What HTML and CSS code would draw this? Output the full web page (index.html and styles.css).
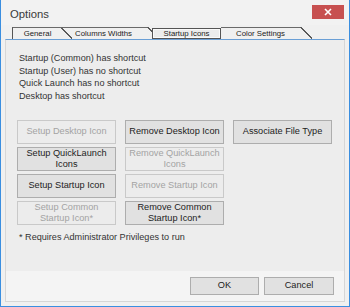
FILE: index.html
```
<!DOCTYPE html>
<html lang="en">

<head>
    <meta charset="UTF-8">
    <title>Options</title>
    <link rel="stylesheet" href="styles.css">
</head>

<body>
    <div class="window">
        <div class="titlebar">
            <span class="title">Options</span>
            <button class="close" title="Close">
                <svg width="8" height="8" viewBox="0 0 8 8">
                    <path d="M1 1 L7 7 M7 1 L1 7" stroke="#fff" stroke-width="1.6" fill="none" />
                </svg>
            </button>
        </div>

        <div class="tabs">
            <div class="tab tab-first" style="width: 48px;">General</div>
            <div class="tab" style="width: 87px;">Columns Widths</div>
            <div class="tab tab-active">Startup Icons</div>
            <div class="tab" style="width: 79px;">Color Settings</div>
        </div>

        <div class="panel">
            <div class="page">
                <div class="status">
                    <p>Startup (Common) has shortcut</p>
                    <p>Startup (User) has no shortcut</p>
                    <p>Quick Launch has no shortcut</p>
                    <p>Desktop has shortcut</p>
                </div>

                <div class="actions">
                    <button class="btn" disabled>Setup Desktop Icon</button>
                    <button class="btn">Remove Desktop Icon</button>
                    <button class="btn">Associate File Type</button>

                    <button class="btn">Setup QuickLaunch Icons</button>
                    <button class="btn" disabled>Remove QuickLaunch Icons</button>
                    <span></span>

                    <button class="btn">Setup Startup Icon</button>
                    <button class="btn" disabled>Remove Startup Icon</button>
                    <span></span>

                    <button class="btn" disabled>Setup Common Startup Icon*</button>
                    <button class="btn">Remove Common Startup Icon*</button>
                    <span></span>
                </div>

                <p class="note">* Requires Administrator Privileges to run</p>
            </div>

            <div class="footer">
                <button class="btn btn-ok">OK</button>
                <button class="btn btn-cancel">Cancel</button>
            </div>
        </div>
    </div>
</body>

</html>
```

FILE: styles.css
```
body {
    margin: 0;
    padding: 0;
    background-color: #f0f0f0;
    font-family: "Liberation Sans", Arial, sans-serif;
    color: #333;
}

.window {
    width: 350px;
    height: 307px;
    box-sizing: border-box;
    border: 1px solid #3a8ee0;
    border-top: none;
    background-color: #f0f0f0;
    display: flex;
    flex-direction: column;
}

.titlebar {
    height: 25px;
    display: flex;
    align-items: flex-start;
    background-color: #f2f2f2;
}

.title {
    font-size: 11.3px;
    line-height: 14px;
    margin: 7px 0 0 9px;
    color: #3a3a3a;
}

.close {
    margin: 5px 5px 0 auto;
    width: 32px;
    height: 14px;
    padding: 0;
    border: none;
    background-color: #c75050;
    display: flex;
    align-items: center;
    justify-content: center;
}

.tabs {
    display: flex;
    height: 12px;
    margin: 2px 0 0 11px;
}

.tab {
    position: relative;
    box-sizing: border-box;
    height: 12px;
    border-top: 1px solid #6a6a6a;
    font-size: 7.8px;
    line-height: 11px;
    color: #222;
    text-align: center;
    white-space: nowrap;
}

.tab::after {
    content: '';
    position: absolute;
    top: -1px;
    right: -12px;
    width: 12px;
    height: 12px;
    background: linear-gradient(to top right, transparent 46%, #5a5a5a 47%, #5a5a5a 55%, transparent 56%);
}

.tab-first {
    border-left: 1px solid #555;
    padding-left: 2px;
}

.tab-active {
    z-index: 1;
    width: 69px;
    height: 11px;
    margin: 1px 0 0 5px;
    border: 1px solid #555;
    background-color: #ececec;
    box-shadow: inset 0 0 0 1px #fafafa;
    line-height: 9px;
}

.tab-active::after {
    display: none;
}

.panel {
    flex: 1;
    margin: 0 4px 4px 4px;
    border: 1px solid #d6d6d6;
    border-top: 1px solid #6a9fd6;
    display: flex;
    flex-direction: column;
}

.page {
    flex: 1;
    background-color: #ededed;
    padding: 12px 0 0 11px;
}

.status p {
    margin: 0;
    padding-left: 2px;
    font-size: 9.1px;
    line-height: 12.7px;
}

.actions {
    display: grid;
    grid-template-columns: 99px 99px 99px;
    grid-auto-rows: 24px;
    column-gap: 9px;
    row-gap: 3px;
    margin-top: 17px;
}

.btn {
    box-sizing: border-box;
    padding: 0 1px;
    border: 1px solid #adadad;
    background-color: #e1e1e1;
    color: #222;
    font-family: "Liberation Sans", Arial, sans-serif;
    font-size: 9.2px;
    line-height: 11.3px;
}

.btn:disabled {
    border-color: #c9c9c9;
    background-color: #ececec;
    color: #a3a3a3;
}

.note {
    margin: 6px 0 0 0;
    padding-left: 2px;
    font-size: 9.1px;
    line-height: 12.7px;
}

.footer {
    height: 30px;
    box-sizing: border-box;
    background-color: #f4f4f4;
    display: flex;
    justify-content: flex-end;
    gap: 5px;
    padding: 6px 10px 0 0;
}

.footer .btn {
    height: 18px;
}

.btn-ok {
    width: 69px;
}

.btn-cancel {
    width: 70px;
}
```
